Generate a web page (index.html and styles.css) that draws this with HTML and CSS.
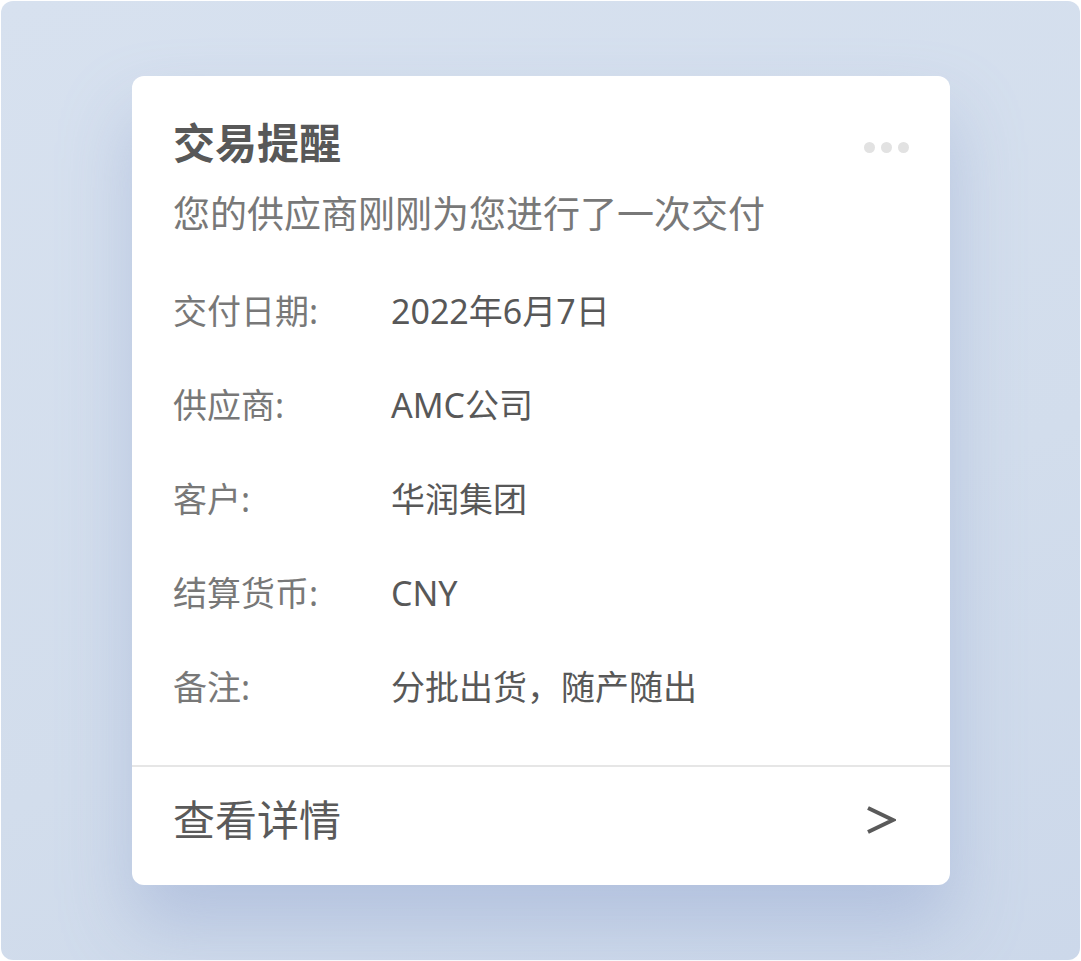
FILE: index.html
```html
<!DOCTYPE html>
<html lang="zh-CN">
<head>
    <meta charset="UTF-8">
    <meta name="viewport" content="width=device-width, initial-scale=1.0">
    <title>交易提醒</title>
    <link rel="stylesheet" href="styles.css">
</head>
<body>
    <div class="frame">
        <div class="card">
            <div class="head">
                <h1 class="title">交易提醒</h1>
                <div class="more"><span></span><span></span><span></span></div>
            </div>
            <p class="sub">您的供应商刚刚为您进行了一次交付</p>
            <div class="rows">
                <div class="row"><span class="label">交付日期:</span><span class="value">2022年6月7日</span></div>
                <div class="row"><span class="label">供应商:</span><span class="value">AMC公司</span></div>
                <div class="row"><span class="label">客户:</span><span class="value">华润集团</span></div>
                <div class="row"><span class="label">结算货币:</span><span class="value">CNY</span></div>
                <div class="row"><span class="label">备注:</span><span class="value">分批出货，随产随出</span></div>
            </div>
            <div class="footer">
                <span>查看详情</span>
                <svg class="arrow" width="30" height="28" viewBox="0 0 30 28">
                    <polyline points="2,2 27,14 2,26" fill="none" stroke="#5a5a5a" stroke-width="4"/>
                </svg>
            </div>
        </div>
    </div>
</body>
</html>
```

FILE: styles.css
```css
* {
    margin: 0;
    padding: 0;
    box-sizing: border-box;
}
body {
    font-family: "Noto Sans", "Noto Sans CJK SC", sans-serif;
    background: #fff;
    padding: 1px;
}
.frame {
    width: 1079px;
    height: 959px;
    border-radius: 12px;
    background: linear-gradient(160deg, #d7e1ef 0%, #d2ddec 60%, #ccd8ea 100%);
    padding-top: 75px;
    padding-left: 131px;
}
.card {
    width: 818px;
    height: 809px;
    background: #fff;
    border-radius: 12px;
    box-shadow: 0 40px 70px rgba(140, 160, 205, 0.42);
    padding-top: 41px;
}
.head {
    display: flex;
    justify-content: space-between;
    align-items: center;
    padding: 0 41px;
}
.title {
    font-family: "Noto Sans CJK SC", sans-serif;
    font-size: 42px;
    line-height: 48px;
    font-weight: 700;
    color: #585858;
}
.more {
    display: flex;
    gap: 6px;
    margin-top: 12px;
}
.more span {
    width: 11px;
    height: 11px;
    border-radius: 50%;
    background: #e2e2e2;
}
.sub {
    font-size: 37px;
    line-height: 48px;
    color: #787878;
    padding: 0 41px;
    margin-top: 25px;
}
.rows {
    display: flex;
    flex-direction: column;
    gap: 46px;
    padding: 0 41px;
    margin-top: 49px;
    padding-bottom: 54px;
    border-bottom: 2px solid #e6e6e6;
}
.row {
    display: flex;
    font-size: 34px;
    line-height: 48px;
}
.label {
    width: 218px;
    color: #787878;
}
.value {
    color: #585858;
}
.footer {
    display: flex;
    justify-content: space-between;
    align-items: center;
    padding: 29px 54px 0 41px;
    font-size: 42px;
    line-height: 48px;
    color: #5a5a5a;
}
.arrow {
    display: block;
}
```
